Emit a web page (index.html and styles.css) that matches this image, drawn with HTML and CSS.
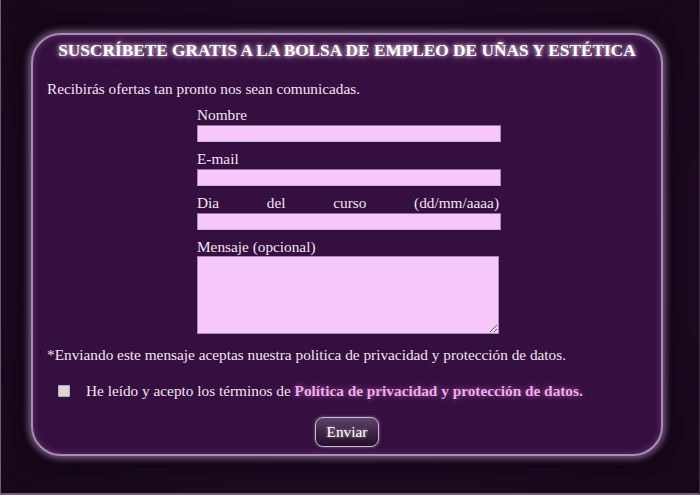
FILE: index.html
```html
<!DOCTYPE html>
<html lang="es">
<head>
<meta charset="utf-8">
<title>Bolsa de empleo</title>
<link rel="stylesheet" href="styles.css">
</head>
<body>
<div class="page">
  <div class="card">
    <h1 class="title">SUSCRÍBETE GRATIS A LA BOLSA DE EMPLEO DE UÑAS Y ESTÉTICA</h1>
    <p class="intro">Recibirás ofertas tan pronto nos sean comunicadas.</p>
    <form class="form">
      <label class="label">Nombre</label>
      <input class="field" type="text">
      <label class="label">E-mail</label>
      <input class="field" type="text">
      <label class="label justify">Dia del curso (dd/mm/aaaa)</label>
      <input class="field" type="text">
      <label class="label">Mensaje (opcional)</label>
      <textarea class="area"></textarea>
    </form>
    <p class="note">*Enviando este mensaje aceptas nuestra politica de privacidad y protección de datos.</p>
    <div class="accept">
      <input class="check" type="checkbox">
      <span class="accept-text">He leído y acepto los términos de <a class="link" href="#">Política de privacidad y protección de datos.</a></span>
    </div>
    <div class="actions">
      <button class="send" type="button">Enviar</button>
    </div>
  </div>
</div>
</body>
</html>
```
FILE: styles.css
```css
html, body {
  margin: 0;
  padding: 0;
}
body {
  width: 700px;
  height: 495px;
  background: #1e0b23;
  font-family: "Liberation Serif", "Times New Roman", serif;
  color: #f3e4f3;
  overflow: hidden;
}
.page {
  box-sizing: border-box;
  width: 700px;
  height: 495px;
  padding: 33px 0 0 31px;
  border-left: 1px solid #6e6072;
  border-right: 1px solid #3a2c3e;
  border-bottom: 2px solid #6e6072;
  background: radial-gradient(ellipse at 50% 50%, #2a0f31 0%, #1f0b25 60%, #170819 100%);
}
.card {
  box-sizing: border-box;
  width: 632px;
  height: 423px;
  margin-left: -1px;
  background: #350f3f;
  border: 2px solid #a98bb7;
  border-radius: 30px;
  box-shadow: 0 0 6px 3px rgba(205, 170, 220, 0.5), 0 0 28px 9px rgba(8, 0, 12, 0.75), inset 0 0 7px rgba(180, 140, 200, 0.35);
  padding: 5px 14px 0 14px;
}
.title {
  margin: 0;
  font-size: 17.3px;
  line-height: 21px;
  font-weight: bold;
  text-align: center;
  color: #ffffff;
  text-shadow: 0 0 4px rgba(255, 230, 255, 0.9), 0 0 8px rgba(230, 190, 240, 0.6);
}
.intro {
  margin: 19px 0 0 0;
  font-size: 15.3px;
  line-height: 18px;
}
.form {
  display: flex;
  flex-direction: column;
  width: 304px;
  margin: 8px 0 0 150px;
}
.label {
  display: block;
  font-size: 15.3px;
  line-height: 18px;
}
.justify {
  text-align: justify;
  text-align-last: justify;
  width: 302px;
}
.field {
  box-sizing: border-box;
  display: block;
  width: 304px;
  height: 17px;
  margin: 1px 0 8px 0;
  padding: 0 2px;
  background: #f8c8fc;
  border: 1px solid #a58ead;
  border-top-color: #8e7596;
  border-bottom-color: #c9b4cf;
  outline: none;
}
.area {
  box-sizing: border-box;
  display: block;
  width: 302px;
  height: 78px;
  margin: 0;
  padding: 2px;
  background: #f8c8fc;
  border: 1px solid #a58ead;
  outline: none;
  resize: both;
  font-family: inherit;
}
.note {
  margin: 12px 0 0 0;
  font-size: 15.3px;
  line-height: 18px;
}
.accept {
  display: flex;
  align-items: center;
  margin: 18px 0 0 11px;
  font-size: 15.3px;
  line-height: 18px;
}
.check {
  -webkit-appearance: none;
  appearance: none;
  box-sizing: border-box;
  width: 12px;
  height: 12px;
  margin: 0 16px 0 0;
  background: #dcd6dc;
  border: 1px solid #b8b0ba;
  border-radius: 1px;
}
.link {
  color: #f3a9f0;
  font-weight: bold;
  text-decoration: none;
  text-shadow: 0 0 6px rgba(240, 150, 240, 0.55);
}
.actions {
  display: flex;
  justify-content: center;
  margin-top: 17px;
}
.send {
  box-sizing: border-box;
  width: 64px;
  height: 30px;
  padding: 0;
  font-family: "Liberation Serif", "Times New Roman", serif;
  font-size: 15.3px;
  color: #ffffff;
  background: linear-gradient(to bottom, #5e4468 0%, #3f2447 50%, #24102a 100%);
  border: 1px solid #cdb6d6;
  border-radius: 8px;
  box-shadow: 0 0 3px rgba(220, 190, 230, 0.6);
  text-shadow: 0 0 3px rgba(255, 255, 255, 0.6);
}
```
